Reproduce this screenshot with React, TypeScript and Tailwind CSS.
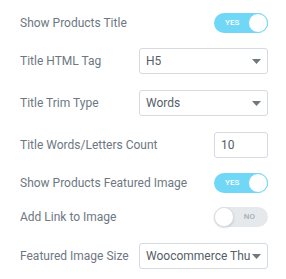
import React from "react";

function Toggle({ on }: { on: boolean }) {
  return on ? (
    <div className="relative h-5 w-[54px] shrink-0 rounded-full bg-[#71d7f7]">
      <span className="absolute left-[11px] top-0 text-[8px] leading-5 font-medium text-white">
        YES
      </span>
      <span className="absolute right-0 top-0 h-5 w-5 rounded-full border border-[#71d7f7] bg-white" />
    </div>
  ) : (
    <div className="relative h-5 w-[54px] shrink-0 rounded-full bg-[#e6e9ec]">
      <span className="absolute right-[13px] top-0 text-[8px] leading-5 font-medium text-[#a4afb7]">
        NO
      </span>
      <span className="absolute left-0 top-0 h-5 w-5 rounded-full border border-[#dcdfe2] bg-white shadow-[0_1px_2px_rgba(0,0,0,0.15)]" />
    </div>
  );
}

function Select({ value }: { value: string }) {
  return (
    <div className="relative flex h-[26px] w-[129px] shrink-0 items-center rounded-[3px] border border-[#d5dadf] bg-white pl-[6px] pr-[17px]">
      <span className="overflow-hidden whitespace-nowrap text-[12px] text-[#556068]">{value}</span>
      <svg className="absolute right-[6px] top-[10px]" width="9" height="5" viewBox="0 0 9 5">
        <path d="M0 0h9L4.5 5z" fill="#6d7882" />
      </svg>
    </div>
  );
}

function Row({ label, children, className = "" }: { label: string; children: React.ReactNode; className?: string }) {
  return (
    <div className={`flex items-center justify-between ${className}`}>
      <span className="whitespace-nowrap text-[12px] text-[#6d7882]">{label}</span>
      {children}
    </div>
  );
}

export default function App() {
  return (
    <div
      className="h-[279px] w-[286px] bg-white pl-5 pr-[18px] pt-[13px]"
      style={{ fontFamily: "Roboto, sans-serif" }}
    >
      <Row label="Show Products Title" className="h-5">
        <Toggle on />
      </Row>
      <Row label="Title HTML Tag" className="mt-[15px] h-[26px]">
        <Select value="H5" />
      </Row>
      <Row label="Title Trim Type" className="mt-4 h-[26px]">
        <Select value="Words" />
      </Row>
      <Row label="Title Words/Letters Count" className="mt-4 h-[26px]">
        <div className="flex h-[26px] w-[54px] items-center rounded-[3px] border border-[#d5dadf] bg-white pl-[6px] text-[12px] text-[#556068]">
          10
        </div>
      </Row>
      <Row label="Show Products Featured Image" className="mt-[15px] h-5">
        <Toggle on />
      </Row>
      <Row label="Add Link to Image" className="mt-[14px] h-5">
        <Toggle on={false} />
      </Row>
      <Row label="Featured Image Size" className="mt-4 h-[26px]">
        <Select value="Woocommerce Thumbnail" />
      </Row>
    </div>
  );
}
